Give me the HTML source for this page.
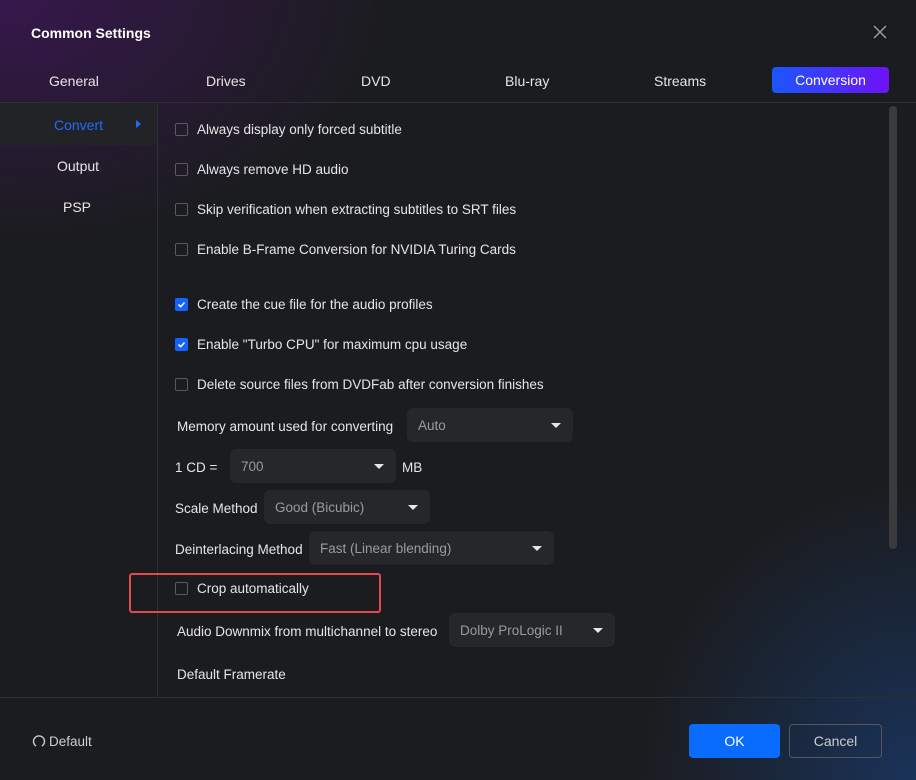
<!DOCTYPE html>
<html><head><style>
*{margin:0;padding:0;box-sizing:border-box}
body{width:916px;height:780px;background:#1b1c1f;font-family:"Liberation Sans",sans-serif;color:#e6e6e6;font-size:13.5px;position:relative;overflow:hidden}
.a{position:absolute;white-space:nowrap}
.bg1{position:absolute;left:0;top:0;width:420px;height:260px;background:radial-gradient(ellipse at 0% 0%,rgba(62,22,88,.8),rgba(27,28,31,0) 65%)}
.bg2{position:absolute;right:0;bottom:0;width:280px;height:300px;background:radial-gradient(ellipse at 100% 100%,rgba(25,55,100,.85),rgba(27,28,31,0) 70%)}
.cb{position:absolute;width:13px;height:13px;border:1px solid #5a5b60;border-radius:2px}
.cb.on{background:#1463ff;border-color:#1463ff}
.dd{position:absolute;height:34px;background:#26272b;border-radius:6px;color:#9a9ba0;padding-left:11px;line-height:36px}
.dd:after{content:"";position:absolute;right:12px;top:15px;border-left:5px solid transparent;border-right:5px solid transparent;border-top:5px solid #e6e6e6}
.tab{position:absolute;top:73px;font-size:14px}
</style></head><body>
<div class="bg1"></div><div class="bg2"></div>
<div class="a" style="left:31px;top:25px;font-weight:bold;font-size:14px;color:#fff">Common Settings</div>
<svg class="a" style="left:873px;top:25px" width="14" height="14"><path d="M1 1L13 13M13 1L1 13" stroke="#9a9ba0" stroke-width="1.5"/></svg>
<div class="tab" style="left:49px">General</div>
<div class="tab" style="left:206px">Drives</div>
<div class="tab" style="left:361px">DVD</div>
<div class="tab" style="left:505px">Blu-ray</div>
<div class="tab" style="left:654px">Streams</div>
<div class="a" style="left:772px;top:67px;width:117px;height:26px;border-radius:4px;background:linear-gradient(90deg,#1a56ff,#6e12f5);color:#fff;text-align:center;line-height:26px;font-size:14px">Conversion</div>
<div class="a" style="left:0;top:102px;width:916px;height:1px;background:#2e2f33"></div>
<div class="a" style="left:157px;top:103px;width:1px;height:594px;background:#2e2f33"></div>
<div class="a" style="left:0;top:103px;width:157px;height:42px;background:#222327"></div>
<div class="a" style="left:54px;top:117px;color:#1f6bff;font-size:14px">Convert</div>
<div class="a" style="left:136px;top:120px;border-top:4px solid transparent;border-bottom:4px solid transparent;border-left:5px solid #1f6bff"></div>
<div class="a" style="left:57px;top:158px;font-size:14px">Output</div>
<div class="a" style="left:63px;top:199px;font-size:14px">PSP</div>
<div class="a" style="left:889px;top:106px;width:8px;height:443px;border-radius:4px;background:#3a3b3f"></div>

<div class="cb" style="left:175px;top:123px"></div><div class="a" style="left:197px;top:122px">Always display only forced subtitle</div>
<div class="cb" style="left:175px;top:163px"></div><div class="a" style="left:197px;top:162px">Always remove HD audio</div>
<div class="cb" style="left:175px;top:203px"></div><div class="a" style="left:197px;top:202px">Skip verification when extracting subtitles to SRT files</div>
<div class="cb" style="left:175px;top:243px"></div><div class="a" style="left:197px;top:242px">Enable B-Frame Conversion for NVIDIA Turing Cards</div>
<div class="cb on" style="left:175px;top:298px"><svg width="11" height="11" style="position:absolute;left:0;top:0"><path d="M2.5 5.5L4.7 7.7L8.5 3.5" stroke="#fff" stroke-width="1.5" fill="none"/></svg></div><div class="a" style="left:197px;top:297px">Create the cue file for the audio profiles</div>
<div class="cb on" style="left:175px;top:338px"><svg width="11" height="11" style="position:absolute;left:0;top:0"><path d="M2.5 5.5L4.7 7.7L8.5 3.5" stroke="#fff" stroke-width="1.5" fill="none"/></svg></div><div class="a" style="left:197px;top:337px">Enable "Turbo CPU" for maximum cpu usage</div>
<div class="cb" style="left:175px;top:378px"></div><div class="a" style="left:197px;top:377px">Delete source files from DVDFab after conversion finishes</div>
<div class="a" style="left:177px;top:419px">Memory amount used for converting</div>
<div class="dd" style="left:407px;top:408px;width:166px">Auto</div>
<div class="a" style="left:175px;top:460px">1 CD =</div>
<div class="dd" style="left:230px;top:449px;width:166px">700</div>
<div class="a" style="left:402px;top:460px">MB</div>
<div class="a" style="left:175px;top:501px">Scale Method</div>
<div class="dd" style="left:264px;top:490px;width:166px">Good (Bicubic)</div>
<div class="a" style="left:175px;top:542px">Deinterlacing Method</div>
<div class="dd" style="left:309px;top:531px;width:245px">Fast (Linear blending)</div>
<div class="a" style="left:129px;top:573px;width:252px;height:40px;border:2px solid #e5484d;border-radius:3px"></div>
<div class="cb" style="left:175px;top:582px"></div><div class="a" style="left:197px;top:581px">Crop automatically</div>
<div class="a" style="left:177px;top:624px">Audio Downmix from multichannel to stereo</div>
<div class="dd" style="left:449px;top:613px;width:166px">Dolby ProLogic II</div>
<div class="a" style="left:177px;top:667px">Default Framerate</div>
<div class="a" style="left:0;top:697px;width:916px;height:1px;background:#2e2f33"></div>
<svg class="a" style="left:32px;top:734px" width="14" height="14"><path d="M4 12A5.5 5.5 0 1 1 10 12" stroke="#cfcfcf" stroke-width="1.4" fill="none"/></svg>
<div class="a" style="left:49px;top:734px;color:#cfcfcf">Default</div>
<div class="a" style="left:689px;top:724px;width:91px;height:34px;background:#0a6bff;border-radius:4px;color:#fff;text-align:center;line-height:34px;font-size:14px">OK</div>
<div class="a" style="left:789px;top:724px;width:93px;height:34px;border:1px solid #55575c;border-radius:4px;color:#cfcfcf;text-align:center;line-height:32px;font-size:14px">Cancel</div>
</body></html>
